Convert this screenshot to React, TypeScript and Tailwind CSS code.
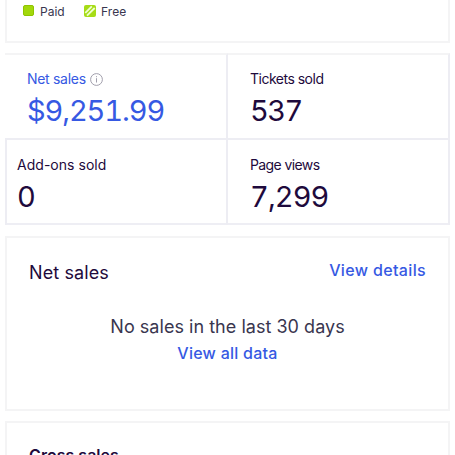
import React from "react";

function Metric({ label, value, className, labelClass, valueClass, info }: {
  label: string; value: string; className: string; labelClass: string; valueClass: string; info?: boolean;
}) {
  return (
    <div className={className}>
      <div className="flex h-5 items-center gap-1 text-[14px] leading-5">
        <span className={labelClass}>{label}</span>
        {info && (
          <svg width="13" height="13" viewBox="0 0 13 13" fill="none" stroke="#9694a3" strokeWidth="0.9">
            <circle cx="6.5" cy="6.5" r="5.9" />
            <path d="M6.5 5.2v4.3M6.5 3.2v1" />
          </svg>
        )}
      </div>
      <div className={`mt-1 h-9 text-[29px] leading-9 tabular-nums ${valueClass}`}>{value}</div>
    </div>
  );
}

export default function App() {
  return (
    <main className="flex h-[455px] w-[455px] flex-col overflow-hidden whitespace-nowrap bg-white pl-[5px] font-['Inter',sans-serif] text-[#1e0a3c]">
      <section className="flex h-[43px] w-[445px] shrink-0 items-start border-2 border-t-0 border-[#f4f4f5] pl-4 pt-[4px] text-[12px] leading-4 text-[#39364f]">
        <span className="mt-px size-[11px] rounded-[2px] border border-[#8fc400] bg-[#a2d80b]" />
        <span className="ml-[6px] w-[44px]">Paid</span>
        <svg className="mt-px" width="12" height="12" viewBox="0 0 12 12">
          <rect width="12" height="12" rx="2" fill="#a6dc16" />
          <path d="M1.3 7.8 7.8 1.3M3 10.7 10.7 3" stroke="#efffcf" strokeWidth="1.8" />
        </svg>
        <span className="ml-[5px] tracking-[0.1px]">Free</span>
      </section>

      <section className="mt-[10px] grid h-[172px] w-[445px] shrink-0 grid-cols-[223px_222px] grid-rows-[87px_85px] border-b-2 border-[#eeeef4]">
        <Metric label="Net sales" value="$9,251.99" info className="border-y-2 border-r-2 border-[#ededf3] border-t-[#f4f4f5] pl-[22px] pt-[14px] text-[#3659e3]" labelClass="tracking-[-0.3px]" valueClass="tracking-[-1.1px]" />
        <Metric label="Tickets sold" value="537" className="border-y-2 border-r-2 border-[#ededf3] border-t-[#f4f4f5] pl-[22px] pt-[14px]" labelClass="tracking-[-0.5px]" valueClass="tracking-[-1.5px]" />
        <Metric label="Add-ons sold" value="0" className="border-x-2 border-[#ededf3] pl-[10px] pt-[15px]" labelClass="tracking-[0.03px]" valueClass="" />
        <Metric label="Page views" value="7,299" className="border-r-2 border-[#ededf3] pl-[22px] pt-[15px]" labelClass="tracking-[-0.6px]" valueClass="tracking-[-0.9px]" />
      </section>

      <section className="mt-[11px] h-[175px] w-[445px] shrink-0 border-2 border-[#f4f4f5]">
        <div className="flex justify-between px-[22px] pt-[21px]">
          <h2 className="mt-[2px] text-[18px] leading-6 tracking-[0.1px]">Net sales</h2>
          <a className="-mt-px text-[16px] font-medium leading-6 tracking-[0.35px] text-[#3659e3]">View details</a>
        </div>
        <div className="mt-[28px] text-center">
          <p className="text-[18px] leading-7 tracking-[0.03px] text-[#39364f]">No sales in the last 30 days</p>
          <a className="block text-[16px] font-medium leading-6 tracking-[0.25px] text-[#3659e3]">View all data</a>
        </div>
      </section>

      <section className="mt-[10px] h-[60px] w-[445px] shrink-0 border-2 border-[#f4f4f5] pl-[22px] pt-[20px]">
        <h2 className="text-[16px] font-semibold leading-6">Gross sales</h2>
      </section>
    </main>
  );
}
